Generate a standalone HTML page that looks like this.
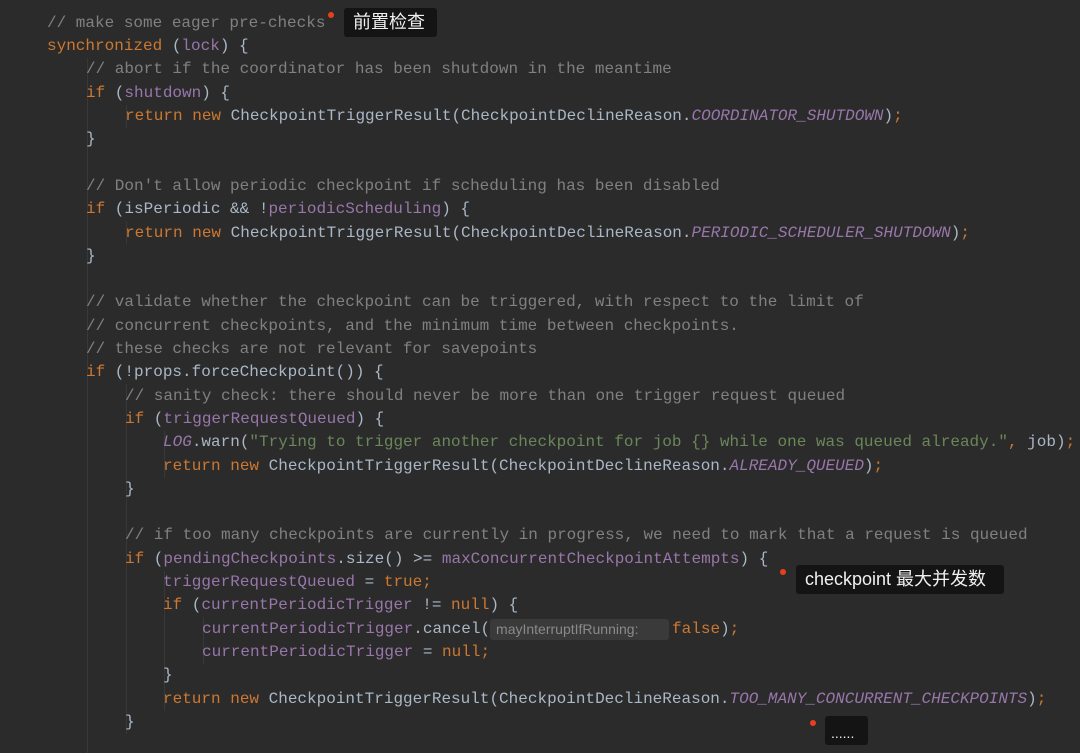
<!DOCTYPE html>
<html><head><meta charset="utf-8"><style>
html,body{margin:0;padding:0;background:#2b2b2b;width:1080px;height:753px;overflow:hidden}
.l{position:absolute;left:0;height:23.3px;line-height:23.3px;font-family:"Liberation Mono",monospace;font-size:16px;color:#a9b7c6;white-space:pre}
.c{color:#808080}.k{color:#cc7832}.f{color:#9876aa}.i{color:#9876aa;font-style:italic}.s{color:#6a8759}
.g{position:absolute;width:1px;background:#383838}
.tip{position:absolute;background:#141414;color:#f0f0f0;font-family:"Liberation Sans","Noto Sans CJK SC",sans-serif;font-size:18px;border-radius:3px;box-sizing:border-box;padding:0 9px;line-height:29px;height:29px}
.dot{position:absolute;width:6px;height:6px;border-radius:50%;background:#e8401c}
.hint{position:absolute;background:#3a3a3a;color:#8a8a8a;font-family:"Liberation Sans",sans-serif;font-size:14px;line-height:21px;height:21px;padding:0 6px;border-radius:3px}
</style></head><body>
<div class="g" style="left:87px;top:58px;height:695px"></div>
<div class="g" style="left:126px;top:105px;height:23px"></div>
<div class="g" style="left:126px;top:221px;height:23px"></div>
<div class="g" style="left:126px;top:384px;height:350px"></div>
<div class="g" style="left:164px;top:431px;height:47px"></div>
<div class="g" style="left:164px;top:571px;height:140px"></div>
<div class="g" style="left:203px;top:617px;height:47px"></div>
<div id="code"></div>
<div class="dot" style="left:328px;top:12px"></div>
<div class="tip" style="left:344px;top:8px;width:93px">前置检查</div>
<div class="dot" style="left:780px;top:569px"></div>
<div class="tip" style="left:796px;top:565px;width:208px">checkpoint 最大并发数</div>
<div class="dot" style="left:810px;top:720px"></div>
<div class="tip" style="left:825px;top:716px;width:43px;font-size:14px;padding:0 6px;line-height:34px">......</div>
<script>
var L=[
[47,'<span class="c">// make some eager pre-checks</span>'],
[47,'<span class="k">synchronized</span> (<span class="f">lock</span>) {'],
[86,'<span class="c">// abort if the coordinator has been shutdown in the meantime</span>'],
[86,'<span class="k">if</span> (<span class="f">shutdown</span>) {'],
[125,'<span class="k">return new</span> CheckpointTriggerResult(CheckpointDeclineReason.<span class="i">COORDINATOR_SHUTDOWN</span>)<span class="k">;</span>'],
[86,'}'],
[0,''],
[86,'<span class="c">// Don\'t allow periodic checkpoint if scheduling has been disabled</span>'],
[86,'<span class="k">if</span> (isPeriodic &amp;&amp; !<span class="f">periodicScheduling</span>) {'],
[125,'<span class="k">return new</span> CheckpointTriggerResult(CheckpointDeclineReason.<span class="i">PERIODIC_SCHEDULER_SHUTDOWN</span>)<span class="k">;</span>'],
[86,'}'],
[0,''],
[86,'<span class="c">// validate whether the checkpoint can be triggered, with respect to the limit of</span>'],
[86,'<span class="c">// concurrent checkpoints, and the minimum time between checkpoints.</span>'],
[86,'<span class="c">// these checks are not relevant for savepoints</span>'],
[86,'<span class="k">if</span> (!props.forceCheckpoint()) {'],
[125,'<span class="c">// sanity check: there should never be more than one trigger request queued</span>'],
[125,'<span class="k">if</span> (<span class="f">triggerRequestQueued</span>) {'],
[163,'<span class="i">LOG</span>.warn(<span class="s">"Trying to trigger another checkpoint for job {} while one was queued already."</span><span class="k">,</span> job)<span class="k">;</span>'],
[163,'<span class="k">return new</span> CheckpointTriggerResult(CheckpointDeclineReason.<span class="i">ALREADY_QUEUED</span>)<span class="k">;</span>'],
[125,'}'],
[0,''],
[125,'<span class="c">// if too many checkpoints are currently in progress, we need to mark that a request is queued</span>'],
[125,'<span class="k">if</span> (<span class="f">pendingCheckpoints</span>.size() &gt;= <span class="f">maxConcurrentCheckpointAttempts</span>) {'],
[163,'<span class="f">triggerRequestQueued</span> = <span class="k">true;</span>'],
[163,'<span class="k">if</span> (<span class="f">currentPeriodicTrigger</span> != <span class="k">null</span>) {'],
[202,'<span class="f">currentPeriodicTrigger</span>.cancel(<span class="hint" style="position:relative;display:inline-block;vertical-align:top;margin-top:1px;margin-left:0px;margin-right:3px;width:167px">mayInterruptIfRunning:</span><span class="k">false</span>)<span class="k">;</span>'],
[202,'<span class="f">currentPeriodicTrigger</span> = <span class="k">null;</span>'],
[163,'}'],
[163,'<span class="k">return new</span> CheckpointTriggerResult(CheckpointDeclineReason.<span class="i">TOO_MANY_CONCURRENT_CHECKPOINTS</span>)<span class="k">;</span>'],
[125,'}']
];
var h='';
for(var n=0;n<L.length;n++){h+='<div class="l" style="left:'+L[n][0]+'px;top:'+(11.8+23.3*n).toFixed(1)+'px">'+L[n][1]+'</div>';}
document.getElementById('code').innerHTML=h;
</script>
</body></html>
